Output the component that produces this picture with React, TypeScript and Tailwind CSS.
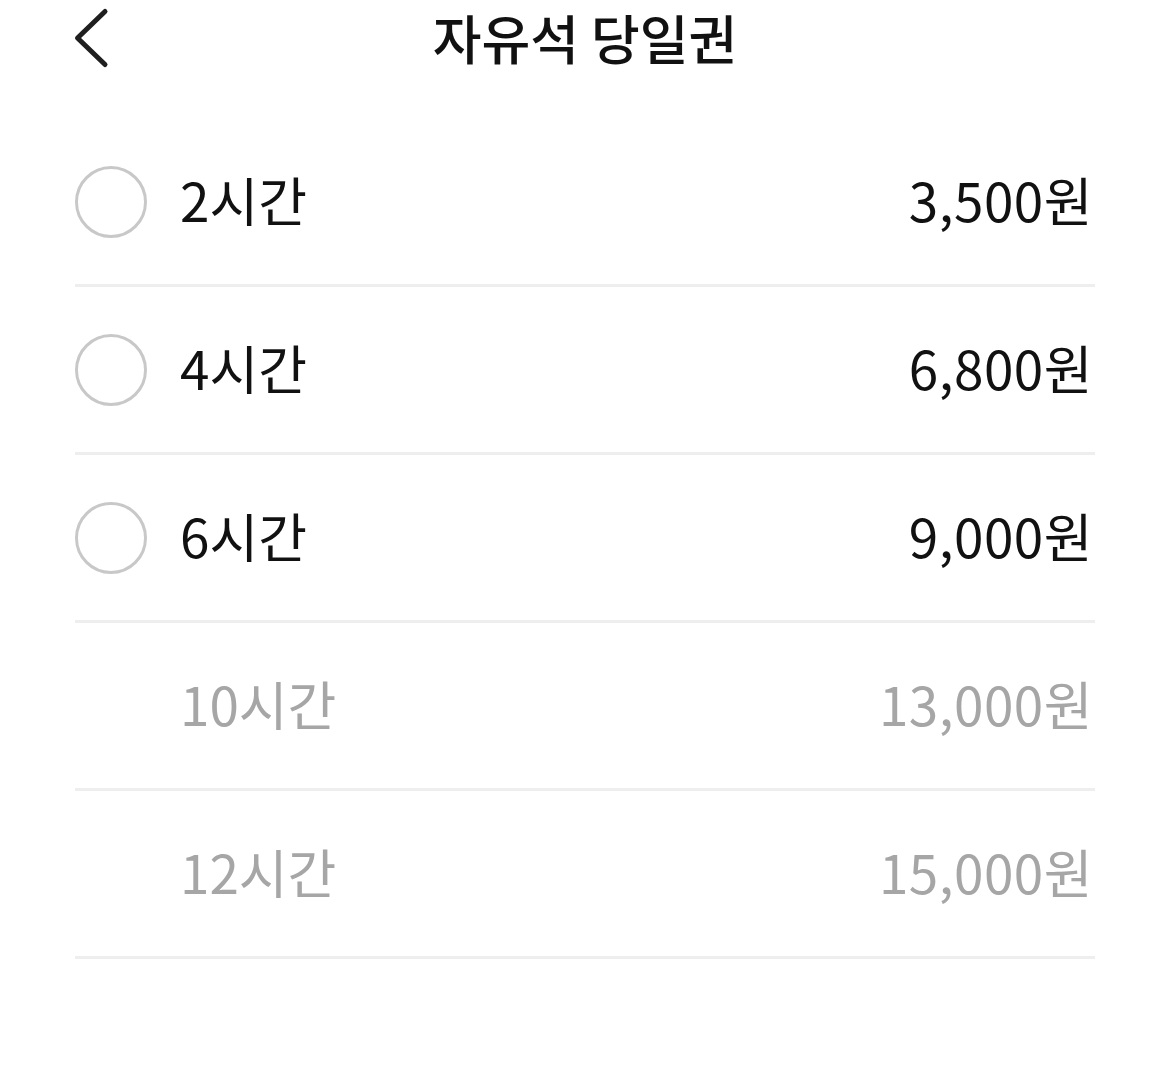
import type { FC } from 'react'

interface Ticket {
  label: string
  price: string
  disabled?: boolean
}

const tickets: Ticket[] = [
  { label: '2시간', price: '3,500원' },
  { label: '4시간', price: '6,800원' },
  { label: '6시간', price: '9,000원' },
  { label: '10시간', price: '13,000원', disabled: true },
  { label: '12시간', price: '15,000원', disabled: true },
]

const TicketRow: FC<{ ticket: Ticket }> = ({ ticket }) => (
  <div className="flex items-center h-[168px] border-b-[3px] border-[#eeeeee]">
    {ticket.disabled ? (
      <span className="w-[72px] h-[72px] shrink-0" />
    ) : (
      <span className="w-[72px] h-[72px] shrink-0 rounded-full border-[3px] border-[#c8c8c8]" />
    )}
    <span
      className={`ml-[33px] -mt-[4px] text-[53px] leading-[1.2] ${ticket.disabled ? 'text-[#a6a6a6]' : 'text-[#111111]'}`}
    >
      {ticket.label}
    </span>
    <span
      className={`ml-auto -mt-[4px] pr-[2px] text-[53px] leading-[1.2] tracking-[0.5px] ${ticket.disabled ? 'text-[#a6a6a6]' : 'text-[#111111]'}`}
    >
      {ticket.price}
    </span>
  </div>
)

export default function App() {
  return (
    <div className="w-[1170px] min-h-[1073px] bg-white font-['Noto_Sans_CJK_KR','Noto_Sans',sans-serif]">
      {/* Header */}
      <div className="grid grid-cols-[1fr_auto_1fr] items-center h-[80px] px-[70px]">
        <button className="justify-self-start w-[42px] h-[72px] -mt-[4px]" aria-label="back">
          <svg width="42" height="72" viewBox="0 0 42 72" fill="none">
            <path
              d="M35 9.5 L7.5 36 L35 62.5"
              stroke="#1f1f1f"
              strokeWidth="5"
              strokeLinecap="round"
              strokeLinejoin="round"
            />
          </svg>
        </button>
        <h1 className="text-[53px] font-medium leading-[72px] text-[#111111] -mt-[6px]">자유석 당일권</h1>
        <span />
      </div>

      {/* List */}
      <div className="mt-[39px] px-[75px]">
        {tickets.map((t) => (
          <TicketRow key={t.label} ticket={t} />
        ))}
      </div>
    </div>
  )
}
